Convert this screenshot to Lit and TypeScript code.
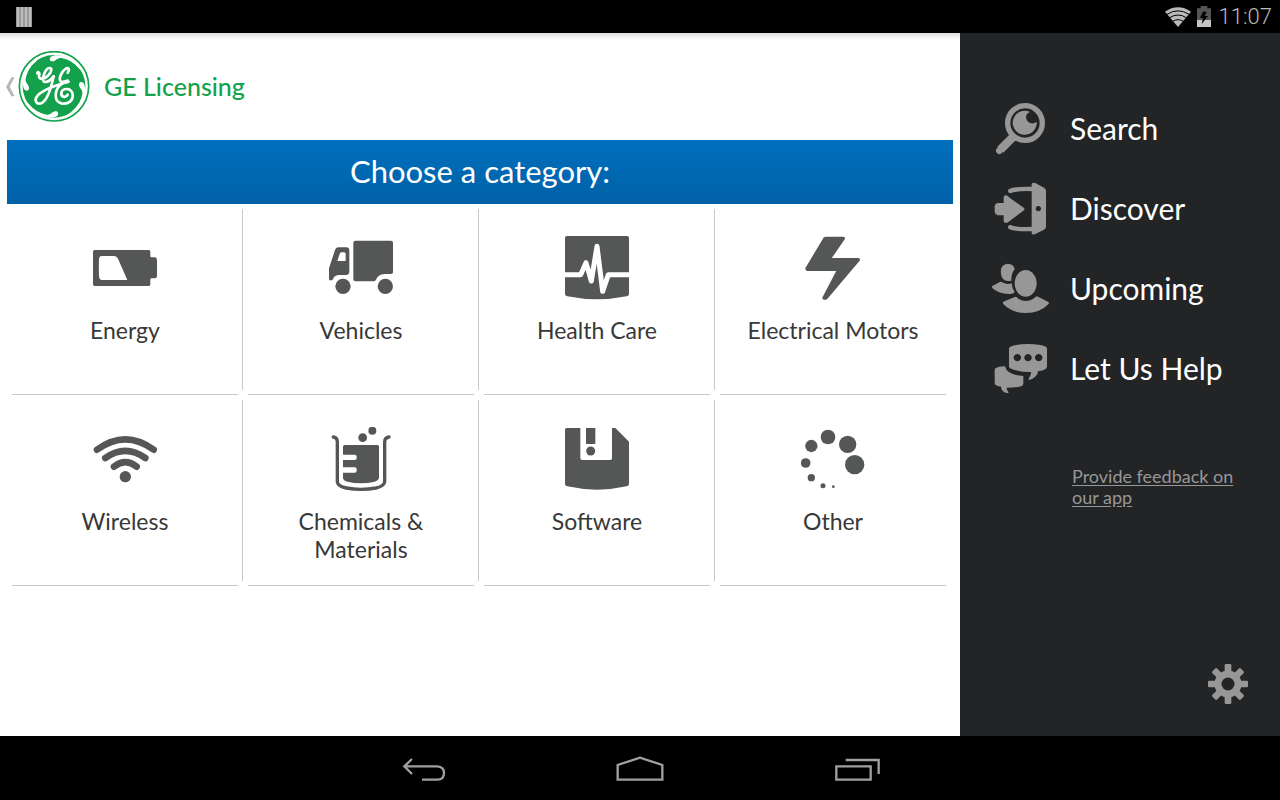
import { LitElement, html, css, svg, type SVGTemplateResult } from "lit";
import { customElement, property } from "lit/decorators.js";

interface Entry {
  label: string;
  viewBox: string;
  art: SVGTemplateResult;
}

const categories: Entry[] = [
  {
    label: "Energy",
    viewBox: "99 78 192 192",
    art: svg`<path fill-rule="evenodd" d="M104 120H266Q271 120 271 125V139Q271 142 275 142H285Q291 143 291 150V198Q291 205 285 205H275Q271 205 271 209V223Q271 228 266 228H104Q99 228 99 223V125Q99 120 104 120ZM124 138Q117 139 117 150Q116 174 117 198Q118 209 124 210H202L174 146Q170 138 163 138Z"/>`,
  },
  {
    label: "Vehicles",
    viewBox: "807 78 192 192",
    art: svg`<path fill-rule="evenodd" d="M835 112H860Q868 113 868 121V186Q867 195 858 195H836Q822 196 819 208L816 211H808L807 207V175L824 123Q827 113 835 112ZM844 127Q840 128 839 132L832 153H857V132Q857 127 852 127Z"/>
      <path d="M886 92H993Q999 92 999 98V187Q999 192 993 192H974Q953 194 948 209Q946 214 940 214H886Q880 214 880 208V98Q880 92 886 92Z"/>
      <circle cx="849" cy="229" r="23"/><circle cx="976" cy="229" r="23"/>`,
  },
  {
    label: "Health Care",
    viewBox: "105 48 192 192",
    art: svg`<path d="M111 48H291Q297 48 297 54V222Q297 227 290 229Q201 247 112 229Q105 227 105 222V54Q105 48 111 48Z"/>
      <path fill="none" stroke="#fff" stroke-width="15" stroke-linejoin="round" d="M102 164H152L168 128L184 183L201 79L218 214L235 164H300"/>`,
  },
  {
    label: "Electrical Motors",
    viewBox: "813 48 192 192",
    art: svg`<path stroke="#555756" stroke-width="10" stroke-linejoin="round" d="M887 55H940L896 119H985L888 234H882L927 148H832L831 146L884 57Z"/>`,
  },
  {
    label: "Wireless",
    viewBox: "99 96 192 192",
    art: svg`<g fill="none" stroke="#555756" stroke-width="20" stroke-linecap="round"><path d="M111 164Q196 102 281 164"/><path d="M136 189Q196 146 256 189"/><path d="M162 215Q196 188 230 215"/></g><circle cx="196" cy="245" r="17"/>`,
  },
  {
    label: "Chemicals & Materials",
    viewBox: "807 96 192 192",
    art: svg`<path fill="none" stroke="#555756" stroke-width="10" stroke-linecap="round" d="M820 126Q832 128 832 141V261Q834 274 859 279Q903 287 948 279Q971 274 974 261V141Q974 128 987 126"/>
      <path d="M854 150H952Q957 150 957 155V248Q956 256 944 260Q903 269 862 260Q850 257 849 249V233H884Q890 233 890 228V222Q890 217 884 217H849V195H884Q890 195 890 190V184Q890 179 884 179H849V155Q849 150 854 150Z"/>
      <circle cx="908" cy="128" r="13"/><circle cx="937" cy="107" r="12"/>`,
  },
  {
    label: "Software",
    viewBox: "105 96 192 192",
    art: svg`<path d="M110 99H151V190Q151 195 156 195H241Q246 195 246 190V99H256L297 140V268Q297 272 290 274Q201 294 112 274Q105 272 105 268V104Q105 99 110 99Z"/>
      <rect x="168" y="99" width="28" height="48"/><circle cx="182" cy="168" r="13.5"/>`,
  },
  {
    label: "Other",
    viewBox: "813 96 192 192",
    art: svg`<circle cx="974" cy="209" r="29"/><circle cx="953" cy="148" r="26"/><circle cx="894" cy="126" r="22"/><circle cx="844" cy="153" r="18.5"/><circle cx="827" cy="204" r="14.5"/><circle cx="844" cy="248" r="11"/><circle cx="879" cy="272" r="7.5"/><circle cx="910" cy="275" r="4"/>`,
  },
];

const menu: Entry[] = [
  {
    label: "Search",
    viewBox: "30 33 180 168",
    art: svg`<circle cx="135" cy="99" r="52" fill="none" stroke="#979797" stroke-width="16"/><path stroke="#979797" stroke-width="20" stroke-linecap="round" d="M58 182L98 142"/>
      <path d="M90 131L111 151L104 154L70 188L52 170L87 135Z"/>
      <path d="M150 66A36 36 0 1 0 170 95Q164 101 154 100A19 19 0 0 1 139 76Q142 68 150 66Z"/>`,
  },
  {
    label: "Discover",
    viewBox: "30 273 180 168",
    art: svg`<path d="M44 348Q45 340 53 339H71V322Q72 314 79 316Q84 318 90 324L132 354Q135 357 132 361L84 397Q74 402 71 394V376H53Q46 375 44 366Z"/>
      <path fill-rule="evenodd" d="M155 282Q157 276 166 279L192 293Q198 297 198 302V410Q198 415 192 419L166 432Q157 436 155 430ZM175 348A8 8 0 1 0 175.1 348Z"/>
      <path fill="none" stroke="#979797" stroke-width="13" d="M156 297Q108 295 88 304M156 417Q108 419 88 411"/><circle cx="90" cy="303" r="6"/><circle cx="90" cy="411" r="6"/>`,
  },
  {
    label: "Upcoming",
    viewBox: "30 33 180 168",
    art: svg`<ellipse cx="137" cy="100" rx="33" ry="40"/>
      <path d="M106 140Q111 141 115 146Q137 160 160 146Q165 141 171 139L204 155Q209 158 205 163Q180 189 137 189Q96 189 70 162Q67 158 70 155Z"/>
      <path d="M83 41Q101 42 104 58Q93 72 94 92Q71 98 64 77Q57 44 83 41Z"/>
      <path d="M61 95Q68 96 73 100Q84 104 95 100Q96 116 104 126Q100 132 86 132Q54 131 37 114Q34 110 37 108Z"/>`,
  },
  {
    label: "Let Us Help",
    viewBox: "30 273 180 168",
    art: svg`<path fill-rule="evenodd" d="M91 290Q110 282 145 282Q180 282 198 290L201 294V351L198 356Q188 362 174 364Q173 382 148 390Q144 390 147 384Q154 376 153 366Q114 366 90 355L87 350V294ZM112 312A11 11 0 1 0 112.1 312ZM144 312A11 11 0 1 0 144.1 312ZM176 312A11 11 0 1 0 176.1 312Z"/>
      <path d="M46 355Q56 349 75 349Q80 375 130 378V402L126 408Q109 413 80 413Q79 421 86 427Q86 430 80 429Q64 425 63 410Q51 409 46 404L44 399V360Z"/>`,
  },
];

const gearTeeth = [0, 45, 90, 135, 180, 225, 270, 315];
const logoSwirls = [0, 90, 180, 270];

@customElement("category-tile")
class CategoryTile extends LitElement {
  @property({ attribute: false }) entry!: Entry;

  static styles = css`
    :host {
      display: block;
    }
    .tile {
      box-sizing: border-box;
      display: flex;
      flex-direction: column;
      align-items: center;
      gap: 16px;
      height: 100%;
      min-height: 191px;
      padding: 32px 16px 23px;
      color: #383838;
      font-size: 23px;
      line-height: 28px;
      text-align: center;
      text-decoration: none;
      background: linear-gradient(#c8c8c8, #c8c8c8) 5px 100% / calc(100% - 10px) 1px no-repeat;
    }
    :host([divided]) .tile {
      background:
        linear-gradient(#c8c8c8, #c8c8c8) 5px 100% / calc(100% - 10px) 1px no-repeat,
        linear-gradient(#c8c8c8, #c8c8c8) 100% 5px / 1px calc(100% - 10px) no-repeat;
    }
    .icon {
      width: 64px;
      height: 64px;
      flex: none;
      fill: #555756;
    }
    .label {
      max-width: 180px;
    }
  `;

  render() {
    return html`<a class="tile" href="#">
      <svg class="icon" viewBox=${this.entry.viewBox} aria-hidden="true">${this.entry.art}</svg>
      <span class="label">${this.entry.label}</span>
    </a>`;
  }
}

@customElement("app-root")
class AppRoot extends LitElement {
  static styles = css`
    :host {
      display: flex;
      flex-direction: column;
      min-height: 100vh;
      background: #000;
      font-family: Lato, "Open Sans", sans-serif;
    }
    svg {
      display: block;
      flex: none;
    }
    button {
      padding: 0;
      border: 0;
      background: none;
      cursor: pointer;
    }
    .status {
      display: flex;
      align-items: center;
      height: 33px;
      padding: 0 8px 0 16px;
      gap: 8px;
      color: #bababa;
      font: 300 22px/34px Roboto, sans-serif;
    }
    .bars {
      margin-right: auto;
    }
    .signal {
      margin-right: -2px;
    }
    .body {
      flex: 1;
      display: grid;
      grid-template-columns: 3fr 1fr;
    }
    .main {
      background: linear-gradient(#dcdcdc, #fff 7px) #fff;
    }
    .header {
      display: flex;
      align-items: center;
      height: 107px;
    }
    .up {
      display: flex;
      align-items: center;
      gap: 3px;
      padding-left: 6px;
    }
    .title {
      margin: 0 0 2px 14px;
      color: #13a24b;
      font-size: 25px;
      font-weight: 500;
      line-height: 32px;
    }
    .banner {
      margin: 0 7px;
      padding-bottom: 2px;
      color: #fff;
      font-size: 31px;
      font-weight: 400;
      line-height: 62px;
      text-align: center;
      background: linear-gradient(#006fbe, #0061a6);
    }
    .grid {
      display: grid;
      grid-template-columns: repeat(4, 1fr);
      margin: 0 9px 0 7px;
    }
    .side {
      display: flex;
      flex-direction: column;
      background: #222426;
      padding: 56px 32px 32px 30px;
    }
    .item {
      display: flex;
      align-items: center;
      gap: 20px;
      height: 80px;
      color: #fff;
      font-size: 30px;
      text-decoration: none;
      white-space: nowrap;
    }
    .item svg {
      width: 60px;
      height: 56px;
      fill: #979797;
    }
    .item span {
      padding-bottom: 2px;
    }
    .feedback {
      margin: 57px 0 0 82px;
      max-width: 170px;
      color: #979797;
      font-size: 18px;
      line-height: 21px;
      text-underline-offset: 2px;
    }
    .gear {
      margin: auto 0 0 auto;
    }
    .keys {
      display: flex;
      justify-content: center;
      align-items: center;
      gap: 168px;
      height: 64px;
    }
    .keys svg {
      fill: none;
      stroke: #a0a0a0;
      stroke-width: 7;
    }
  `;

  render() {
    return html`
      <div class="status">
        <svg class="bars" width="16" height="20" viewBox="0 0 16 20" aria-hidden="true">
          <rect width="16" height="20" fill="#777" />
          <path stroke="#bdbdbd" stroke-width="3" d="M2 0V20M6 0V20M10 0V20M14 0V20" />
        </svg>
        <svg class="signal" width="26" height="20" viewBox="43 16 78 60" aria-hidden="true">
          <path fill="#bababa" d="M82 76L43 30Q82 4 121 30Z" />
          <path fill="none" stroke="#000" stroke-width="3" d="M49 38Q82 17 115 38M57 48Q82 32 107 48M66 59Q82 49 98 59" />
        </svg>
        <svg width="14" height="21" viewBox="141 15 42 63" aria-hidden="true">
          <path fill="#555" d="M152 15H172V22H183V58H141V22H152Z" />
          <path fill="#c4c4c4" d="M141 57H183V78H141Z" />
          <path fill="#000" d="M159 32L150 51H159L155 69L174 45H164L170 32Z" />
        </svg>
        <span>11:07</span>
      </div>

      <div class="body">
        <main class="main">
          <header class="header">
            <button class="up" aria-label="Up">
              <svg width="9" height="20" viewBox="18 230 27 60">
                <path fill="#b8b8b8" d="M34 231H44L29 259L44 288H34L18 260Z" />
              </svg>
              <svg width="72" height="72" viewBox="54 154 216 216">
                <circle cx="162" cy="260" r="104" fill="#fff" stroke="#13a24b" stroke-width="5" />
                <circle cx="162" cy="260" r="94" fill="#13a24b" />
                <g fill="none" stroke="#fff" stroke-linecap="round">
                  ${logoSwirls.map(
                    (angle) => svg`<g transform="rotate(${angle} 162 260)">
                      <path stroke="none" fill="#fff" d="M152 172C160 164 184 165 203 173C222 181 238 197 246 216C228 192 208 179 184 175C172 173 168 184 158 185C149 186 147 177 152 172Z" />
                      <path stroke-width="3" d="M172 169Q214 174 240 208" />
                    </g>`,
                  )}
                  <path stroke-width="8" d="M112 221C112 213 121 219 117 229C116 241 135 239 144 228C155 217 157 205 149 205C137 205 128 230 129 241C131 251 146 249 161 230" />
                  <path stroke-width="8" d="M161 230C154 262 143 303 124 311C109 316 102 301 111 290C124 273 160 260 189 251C197 248 203 249 206 246" />
                  <path stroke-width="8" d="M203 219C211 208 204 202 196 208C183 217 175 239 182 245C190 250 200 243 203 243M187 251C163 266 159 305 184 311C206 315 220 302 218 285C215 263 187 264 184 279C182 291 197 297 203 285" />
                </g>
              </svg>
            </button>
            <h1 class="title">GE Licensing</h1>
          </header>
          <div class="banner" role="heading" aria-level="2">Choose a category:</div>
          <div class="grid">
            ${categories.map(
              (entry, i) => html`<category-tile .entry=${entry} ?divided=${i % 4 !== 3}></category-tile>`,
            )}
          </div>
        </main>

        <aside class="side">
          <nav>
            ${menu.map(
              (entry) => html`<a class="item" href="#">
                <svg viewBox=${entry.viewBox} aria-hidden="true">${entry.art}</svg>
                <span>${entry.label}</span>
              </a>`,
            )}
          </nav>
          <a class="feedback" href="#">Provide feedback on our app</a>
          <button class="gear" aria-label="Settings">
            <svg width="40" height="40" viewBox="-60 -60 120 120">
              <circle r="30" fill="none" stroke="#979797" stroke-width="21" />
              ${gearTeeth.map(
                (angle) => svg`<rect x="-10" y="-60" width="20" height="30" rx="4" fill="#979797" transform="rotate(${angle})" />`,
              )}
            </svg>
          </button>
        </aside>
      </div>

      <nav class="keys">
        <button aria-label="Back">
          <svg width="48" height="40" viewBox="30 54 144 120">
            <path d="M42 109H142Q162 110 162 129Q162 149 142 149H96M66 87L43 109L66 132" />
          </svg>
        </button>
        <button aria-label="Home">
          <svg width="48" height="40" viewBox="678 54 144 120">
            <path d="M683 149V105L750 83L817 105V149Z" />
          </svg>
        </button>
        <button aria-label="Recent apps">
          <svg width="48" height="40" viewBox="1326 54 144 120">
            <path d="M1339 109H1442V149H1339ZM1367 90H1466V132" />
          </svg>
        </button>
      </nav>
    `;
  }
}
